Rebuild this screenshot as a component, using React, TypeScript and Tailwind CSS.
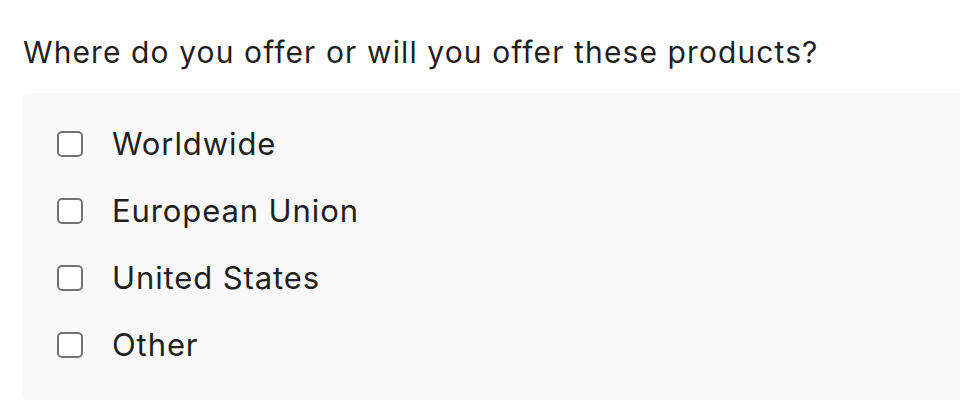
import React from 'react';

const options = ['Worldwide', 'European Union', 'United States', 'Other'];

export default function App() {
    return (
        <div className="w-[960px] h-[408px] overflow-hidden bg-white font-['Inter',sans-serif] text-[#1f1f1f]">
            <h1 className="pt-[32px] pl-[23px] text-[30px] leading-[40px] tracking-[1.1px] font-normal whitespace-nowrap">
                Where do you offer or will you offer these products?
            </h1>
            <div className="ml-[22px] mt-[21px] w-[960px] rounded-[6px] bg-[#f9f9f9] pt-[31px] pb-[35px] pl-[35px]">
                <ul className="flex flex-col gap-[27px]">
                    {options.map((label) => (
                        <li key={label} className="flex items-center h-[40px]">
                            <span className="w-[26px] h-[26px] rounded-[5px] border-2 border-[#737373] bg-white shrink-0"></span>
                            <span className="ml-[29px] text-[31px] leading-[40px] tracking-[0.9px]">{label}</span>
                        </li>
                    ))}
                </ul>
            </div>
        </div>
    );
}
